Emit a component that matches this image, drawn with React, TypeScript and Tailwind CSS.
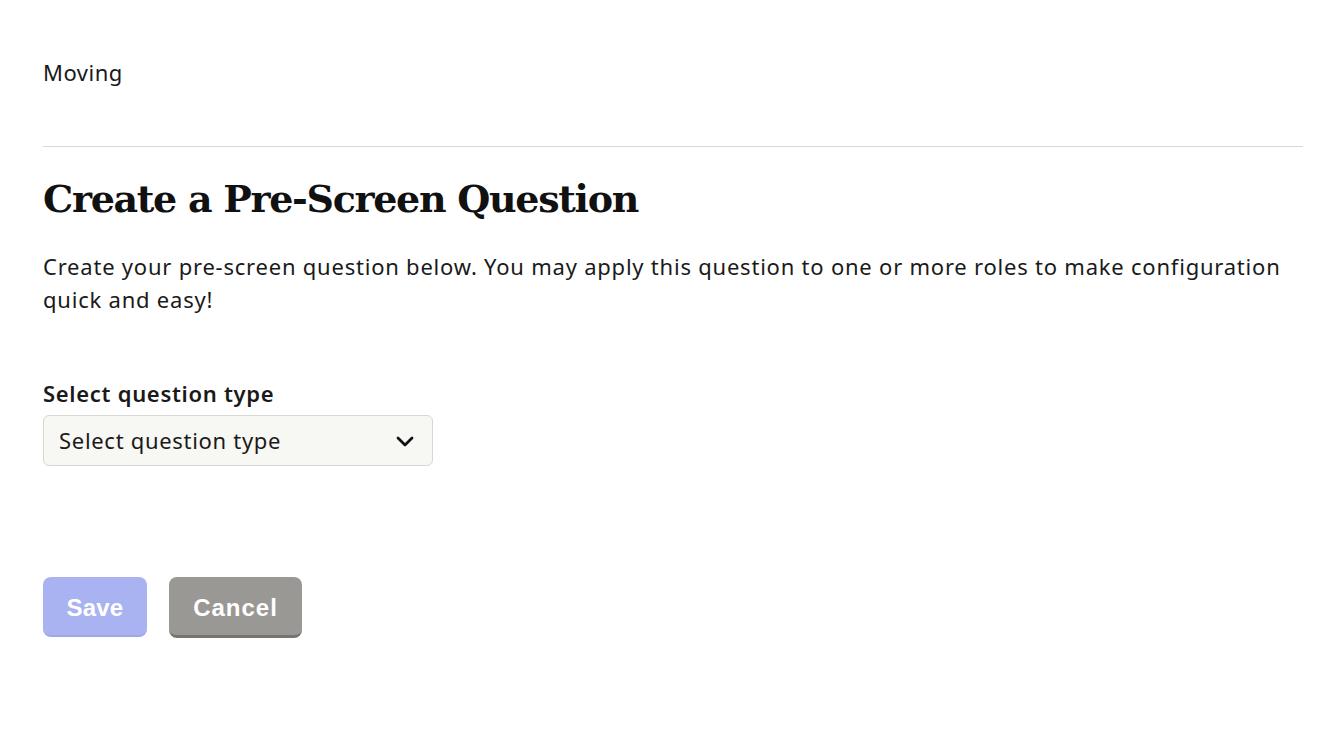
import React from "react";

export default function App() {
  return (
    <div className="min-h-[735px] bg-white px-[43px] pt-[56px] text-[#111] font-['Noto_Sans',sans-serif]">
      <div className="text-[22px] leading-[32px] text-[#1a1a1a] tracking-[0.5px]">Moving</div>
      <div className="mt-[58px] border-t border-[#d9d9d9] w-[1260px]" />
      <h1 className="mt-[28px] font-['DejaVu_Serif',serif] font-bold text-[38px] leading-[48px] text-[#111] tracking-[-1.3px]">
        Create a Pre-Screen Question
      </h1>
      <p className="mt-[27px] text-[22px] leading-[33px] text-[#1a1a1a] max-w-[1250px] tracking-[0.78px]">
        Create your pre-screen question below. You may apply this question to one or more roles to make configuration quick and easy!
      </p>
      <div className="mt-[62px] text-[22px] font-semibold leading-[30px] text-[#1a1a1a] tracking-[0.7px]">Select question type</div>
      <div className="mt-[7px] w-[390px] h-[51px] rounded-[6px] border border-[#d8d8d3] bg-[#f7f7f3] flex items-center justify-between pl-[15px] pr-[17px]">
        <span className="text-[22px] text-[#1a1a1a] tracking-[0.7px]">Select question type</span>
        <svg width="20" height="14" viewBox="0 0 20 14" fill="none">
          <path d="M3 4l7 7 7-7" stroke="#111" strokeWidth="2.8" strokeLinecap="round" strokeLinejoin="round" />
        </svg>
      </div>
      <div className="mt-[111px] flex gap-[22px]">
        <button className="w-[104px] h-[60px] pt-[3px] rounded-[8px] bg-[#a9b3f2] text-white text-[24px] font-bold border-b-[2px] border-[#9ea8e8] font-['Liberation_Sans',sans-serif] tracking-[0.2px]">
          Save
        </button>
        <button className="w-[133px] h-[61px] pt-[3px] rounded-[8px] bg-[#9a9894] text-white text-[24px] font-bold border-b-[3px] border-[#767470] font-['Liberation_Sans',sans-serif] tracking-[1px]">
          Cancel
        </button>
      </div>
    </div>
  );
}
